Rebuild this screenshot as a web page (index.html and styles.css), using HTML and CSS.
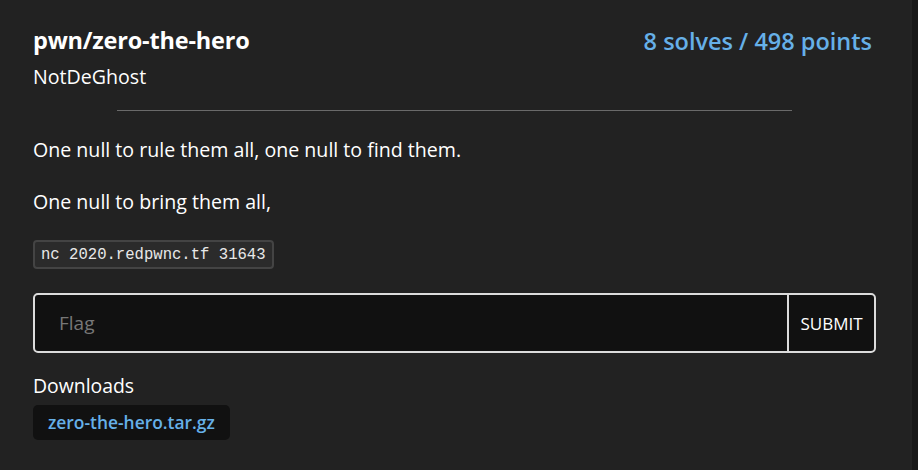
FILE: index.html
```html
<!DOCTYPE html>
<html>
<head>
<meta charset="utf-8">
<link rel="stylesheet" href="styles.css">
</head>
<body>
<div class="page">
  <main class="card">
    <div class="head">
      <div class="names">
        <h1 class="title">pwn/zero-the-hero</h1>
        <div class="author">NotDeGhost</div>
      </div>
      <div class="points">8 solves / 498 points</div>
    </div>
    <hr class="sep">
    <div class="desc">
      <p>One null to rule them all, one null to find them.</p>
      <p>One null to bring them all,</p>
      <p class="cmdline"><code class="cmd">nc 2020.redpwnc.tf 31643</code></p>
    </div>
    <form class="flagform">
      <input class="flaginput" type="text" placeholder="Flag">
      <button class="submit" type="button">SUBMIT</button>
    </form>
    <div class="downloads">
      <div class="dltitle">Downloads</div>
      <a class="dlfile" href="#">zero-the-hero.tar.gz</a>
    </div>
  </main>
  <div class="scrollstrip"></div>
</div>
</body>
</html>
```
FILE: styles.css
```css
html, body {
  margin: 0;
  padding: 0;
  height: 100%;
}
body {
  background: #222222;
  color: #ffffff;
  font-family: "Open Sans", "Noto Sans", sans-serif;
}
.page {
  display: flex;
  min-height: 100%;
}
.card {
  flex: 1;
  padding: 25px 36px 0 33px;
  display: flex;
  flex-direction: column;
}
.scrollstrip {
  width: 6px;
  background: #181818;
}
.head {
  display: flex;
  justify-content: space-between;
  align-items: flex-start;
}
.title {
  margin: 0;
  font-size: 23.5px;
  font-weight: 700;
  line-height: 30px;
  letter-spacing: -0.2px;
}
.author {
  margin-top: 10px;
  font-size: 19.6px;
  line-height: 24px;
}
.points {
  color: #66b0e8;
  font-size: 23.5px;
  font-weight: 600;
  line-height: 30px;
  margin-top: 1px;
  margin-right: 4px;
}
.sep {
  width: 80%;
  margin: 21px auto 0;
  border: 0;
  height: 1px;
  background: #6a6a6a;
}
.desc {
  margin-top: 25px;
  font-size: 19.6px;
  line-height: 28px;
}
.desc p {
  margin: 0 0 24px;
}
.desc p.cmdline {
  margin: 24px 0 0;
  display: flex;
}
.cmd {
  display: block;
  font-family: "Liberation Mono", "DejaVu Sans Mono", monospace;
  font-size: 15.6px;
  line-height: 22px;
  padding: 2px 6px 1px;
  background: #2b2b2b;
  border: 2px solid #444;
  border-radius: 4px;
  color: #e8e8e8;
}
.flagform {
  margin-top: 24px;
  display: flex;
  height: 60px;
  box-sizing: border-box;
  border: 2px solid #dcdcdc;
  border-radius: 5px;
  background: #111111;
  overflow: hidden;
}
.flaginput {
  flex: 1;
  background: transparent;
  border: 0;
  outline: none;
  padding: 0 24px;
  font-family: inherit;
  font-size: 19px;
  color: #fff;
}
.flaginput::placeholder {
  color: #777;
}
.submit {
  border: 0;
  border-left: 2px solid #dcdcdc;
  background: transparent;
  color: #fff;
  font-family: inherit;
  font-size: 17px;
  padding: 0;
  width: 87px;
}
.downloads {
  margin-top: 20px;
  display: flex;
  flex-direction: column;
  align-items: flex-start;
}
.dltitle {
  font-size: 19.4px;
  line-height: 26px;
}
.dlfile {
  margin-top: 6px;
  display: inline-block;
  background: #111111;
  color: #66b0e8;
  text-decoration: none;
  font-size: 17.4px;
  font-weight: 600;
  line-height: 35px;
  padding: 0 15px;
  border-radius: 5px;
}
```
